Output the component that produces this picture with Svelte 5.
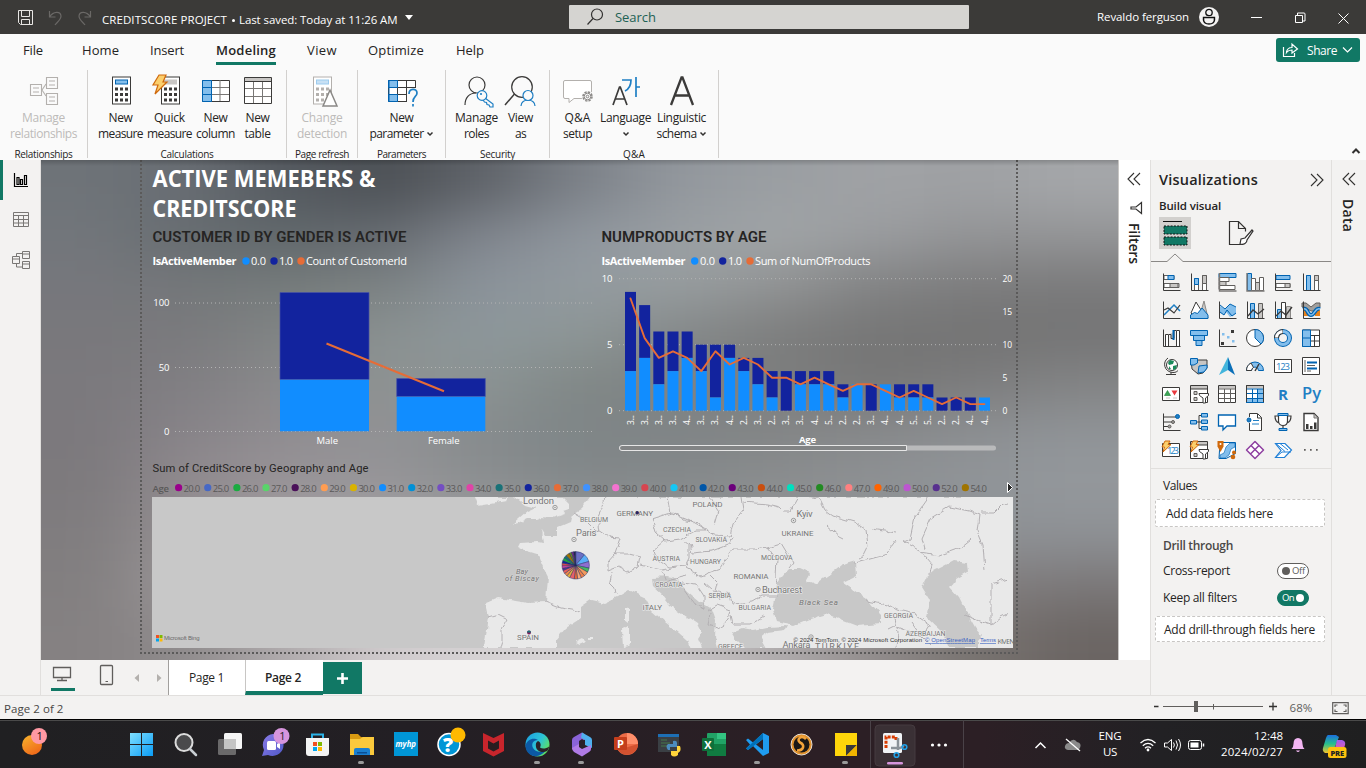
<script>
  // Sets letter-spacing so that a label takes exactly the given width.
  function fit(node, width) {
    const natural = node.getBoundingClientRect().width;
    const n = node.textContent.length;
    node.style.letterSpacing = (width - natural) / n + 'px';
  }

  const K = '#3b3a39', D = '#0063b1', B = '#83beec', G = '#c8c6c4', S = '#605e5c';
  const dots = (x, y, c) => [0, 1, 2].map((r) => [0, 1, 2].map((q) => `<rect x="${x + q * 5}" y="${y + r * 5.5}" width="3" height="3" fill="${c}"/>`).join('')).join('');
  const calc = (c, f, d) => `<rect x="7.5" y="2" width="18" height="27" fill="#fff" stroke="${c}" stroke-width="1"/><rect x="10.5" y="5" width="12" height="4" fill="${f}" stroke="${d}"/>${dots(10, 12.5, c)}`;
  const bolt = '<path d="M7 0h7l-3 7h4L3 19l3-9H1z" fill="#fbcf6d" stroke="#d0690c" stroke-width="1.2"/>';

  const rib = {
    relations: `<g fill="none" stroke="#b3b0ad" stroke-width="1.1"><path d="M2.500 9.500h11v11h-11zM18.500 2.500h11v11h-11zM18.500 18.500h11v11h-11z"/><path d="M5 13h6M5 17h6M21 6h6M21 10h6M21 22h6M21 26h6M14 15l4-6M14 15l4 6" /></g>`,
    measure: calc(K, B, D),
    quick: `<g transform="translate(3 0)">${calc(K, G, G)}</g><path d="M2 13h8v8h-8z" fill="#fafafa"/><g transform="translate(1 0)">${bolt}</g>`,
    column: `<path d="M2.500 5.500h27v21h-27z" fill="#fff" stroke="${K}"/><path d="M11 5v21M20 5v21M3 12.500h26M3 19.500h26" stroke="#797775"/><path d="M2.500 5.500h9v21h-9z" fill="${B}" stroke="${D}"/><path d="M3 12.500h8M3 19.500h8" stroke="${D}"/>`,
    table: `<path d="M2.500 2.500h27v26h-27z" fill="#fff" stroke="${K}"/><path d="M3 3h26v3.500h-26z" fill="${G}"/><path d="M2.500 6.500h27" stroke="${K}"/><path d="M11.500 7v21M20.500 7v21M3 13.500h26M3 21.500h26" stroke="#797775"/>`,
    change: `<g transform="translate(-3 0)">${calc('#b3b0ad', '#c7e0f4', '#9ccbee')}</g><path d="M14 31L21 15l7 16z" fill="#fff" stroke="#8a8886" stroke-width="1.500"/>`,
    param: `<path d="M2.500 5.500h27v21h-27z" fill="#fff" stroke="${K}"/><path d="M11.500 5v21M20.500 5v21M3 12.500h26M3 19.500h26" stroke="${K}"/><path d="M2.500 5.500h9v7h-9zM2.500 19.500h9v7h-9z" fill="${B}" stroke="${D}"/><path d="M3 5v21" stroke="${D}"/><path d="M21 13h12v19H21z" fill="#fafafa"/><path d="M23 19c0-6 8-6 8-1 0 4-4 3-4 9M27 29v2.500" fill="none" stroke="#1f7fc4" stroke-width="1.700"/>`,
    roles: `<g fill="none" stroke="${K}" stroke-width="1.200"><circle cx="14" cy="10" r="8"/><path d="M2 30c0-7 4-12 11-12"/></g><g fill="#fafafa" stroke="#1f7fc4" stroke-width="1.200"><path d="M22 23l8 6v3h-3l-1-2-2-.5-.5-2-2-.5-1.500-2"/><circle cx="19" cy="20.500" r="4.800"/></g><circle cx="18" cy="19" r="1.100" fill="#1f7fc4"/>`,
    view: `<g fill="none" stroke="${K}" stroke-width="1.200"><circle cx="17" cy="12" r="10.300"/><path d="M9.500 19L0 30" stroke-width="1.500"/></g><g fill="#fafafa" stroke="#1f7fc4" stroke-width="1.200"><path d="M16 31c0-8 14-8 14 0"/><circle cx="23" cy="20.500" r="5"/></g>`,
    qa: `<path d="M3 5.500h25q1.500 0 1.500 1.500v15q0 1.500-1.500 1.500H12l-5 4v-4H3q-1.500 0-1.500-1.500V7q0-1.500 1.500-1.500z" fill="#fff" stroke="#b3b0ad"/><circle cx="25.500" cy="21.500" r="6" fill="#fafafa"/><circle cx="25.500" cy="21.500" r="4.500" fill="none" stroke="#8a8886" stroke-width="1.600" stroke-dasharray="2.300 1.200"/><circle cx="25.500" cy="21.500" r="3.300" fill="none" stroke="#8a8886"/><circle cx="25.500" cy="21.500" r="1.300" fill="none" stroke="#8a8886"/>`,
    lang: `<path d="M2 30L8.500 12h.8L16 30M4.500 24h9" fill="none" stroke="${K}" stroke-width="1.700"/><path d="M11 5h9c0 5-2 9-6 11M25 2v20M25 12h4" fill="none" stroke="#1f7fc4" stroke-width="1.700"/>`,
    ling: `<path d="M5 30L15.500 2.500h1L27 30M9 20.500h14" fill="none" stroke="${K}" stroke-width="2.300"/>`
  };

  const groups = [
    { w: 88, label: 'Relationships', lw: 58, off: true, btns: [{ i: 'relations', w: 87, a: 'Manage', aw: 43, b: 'relationships', bw: 67 }] },
    { w: 199, label: 'Calculations', lw: 53, btns: [
      { i: 'measure', w: 50, a: 'New', aw: 24, b: 'measure', bw: 45 }, { i: 'quick', w: 48, a: 'Quick', aw: 31, b: 'measure', bw: 45, dx: -3 },
      { i: 'column', w: 44, a: 'New', aw: 24, b: 'column', bw: 39 }, { i: 'table', w: 40, a: 'New', aw: 24, b: 'table', bw: 26 }], shift: -0.5 },
    { w: 71, label: 'Page refresh', lw: 54, off: true, btns: [{ i: 'change', w: 70, a: 'Change', aw: 41, b: 'detection', bw: 50, dx: 3 }] },
    { w: 88, label: 'Parameters', lw: 49, btns: [{ i: 'param', w: 86, a: 'New', aw: 24, b: 'parameter', bw: 54, c: true }] },
    { w: 104, label: 'Security', lw: 35, btns: [{ i: 'roles', w: 54, a: 'Manage', aw: 43, b: 'roles', bw: 25, dx: 2 }, { i: 'view', w: 34, a: 'View', aw: 25, b: 'as', bw: 11, dx: 0 }], shift: -4 },
    { w: 169, label: 'Q&A', lw: 22, btns: [{ i: 'qa', w: 40, a: 'Q&A', aw: 26, b: 'setup', bw: 29 }, { i: 'lang', w: 56, a: 'Language', aw: 51, c: true, bw: 0, dx: 1 }, { i: 'ling', w: 56, a: 'Linguistic', aw: 49, b: 'schema', bw: 40, c: true }], shift: -0.5 }
  ];
  const menus = [['File', 23, 20], ['Home', 39, 37], ['Insert', 31, 34], ['Modeling', 32, 60], ['View', 31, 30], ['Optimize', 31, 56], ['Help', 32, 28]];

  const ax = `<path d="M1.500 .5v17h17" fill="none" stroke="${K}"/>`;
  const card = `<path d="M.5 2.500h17v13H.5z" fill="#fff" stroke="${K}"/>`;
  const miniBolt = '<path d="M3 0h5L6 3.500h3L1 11l1.500-5H0z" fill="#fbcf6d" stroke="#d0690c"/>';
  const viz = [
    `<path d="M2 2.500h10v4H2zM2 10.500h15v4H2z" fill="#fff" stroke="${S}"/><path d="M6 2.500h6v4H6z" fill="${B}" stroke="${D}"/><path d="M8 10.500h8v4H8z" fill="${G}" stroke="${S}"/>${ax}`,
    `<path d="M4.500 5.500h4v12h-4zM12.500 2.500h4v15h-4z" fill="#fff" stroke="${S}"/><path d="M4.500 5.500h4v6h-4z" fill="${B}" stroke="${D}"/><path d="M12.500 2.500h4v8h-4z" fill="${G}" stroke="${S}"/>${ax}`,
    `<path d="M1 .5h17v4H1z" fill="${B}" stroke="${D}"/><path d="M1 4.500h10v4H1zM1 12.500h16v4H1z" fill="#fff" stroke="${S}"/><path d="M1 8.500h7v4H1z" fill="${G}" stroke="${S}"/><path d="M1.500 0v18h17" fill="none" stroke="#797775" stroke-width="1.400"/>`,
    `<path d="M1.500 .5h4v17h-4z" fill="${B}" stroke="${D}"/><path d="M5.500 5.500h4v12h-4z" fill="#fff" stroke="${S}"/><path d="M9.500 9.500h4v8h-4z" fill="${G}" stroke="${S}"/><path d="M13.500 4.500h4v13h-4z" fill="#fff" stroke="${S}"/><path d="M1 0v18h17.500" fill="none" stroke="#797775" stroke-width="1.400"/>`,
    `<path d="M2 2.500h14v4H2z" fill="${B}" stroke="${D}"/><path d="M2 10.500h14v4H2z" fill="#fff" stroke="${S}"/><path d="M11 10.500h5v4h-5z" fill="${G}" stroke="${S}"/>${ax}`,
    `<path d="M4.500 2.500h4v15h-4zM12.500 2.500h4v15h-4z" fill="#fff" stroke="${S}"/><path d="M4.500 2.500h4v15h-4z" fill="${B}" stroke="${D}"/><path d="M12.500 2.500h4v5h-4z" fill="${G}" stroke="${S}"/>${ax}`,
    `<path d="M2 14L12 4l6 6" fill="none" stroke="#1f7fc4" stroke-width="1.500"/><path d="M2 9l4-2 6 5 6-8" fill="none" stroke="${K}" stroke-width="1.200"/>${ax}`,
    `<path d="M9 17L14 0l4 17z" fill="${G}" stroke="#8a8886"/><path d="M1 12L6 1l5 8-5 8z" fill="#fff" stroke="${K}"/><path d="M.5 17.500V14l4-2.500 3 1L12 7l6 7v3.500z" fill="${B}" stroke="${D}"/>`,
    `<path d="M2 5l5 3 5-5 6 3v7l-6 3-4-5-2 3-4-2z" fill="${B}"/><path d="M2 4l5 4 5-5 6 3M2 11l4 3 3-5 5 6 4-3" fill="none" stroke="${D}"/>${ax}`,
    `<path d="M4.500 2.500h4v15h-4z" fill="${B}" stroke="${D}"/><path d="M12.500 2.500h4v15h-4z" fill="${G}" stroke="${S}"/><path d="M2 15l5-6 5 4 6-5" fill="none" stroke="${K}" stroke-width="1.300"/>${ax}`,
    `<path d="M3.500 8.500h4v9h-4z" fill="${B}" stroke="${D}"/><path d="M7.500 1.500h4v16h-4z" fill="#fff" stroke="${K}"/><path d="M12.500 5.500h4v12h-4z" fill="${G}" stroke="#8a8886"/><path d="M2 15l5-5 5 4 6-8" fill="none" stroke="${K}" stroke-width="1.300"/>${ax}`,
    `<path d="M1 9h5v6H1zM13 9h5v6h-5z" fill="#e8811a"/><path d="M0 2h4l5 4 5-4h4v4l-5 4h-4L2 6H0z" fill="#a19f9d" stroke="#605e5c"/><path d="M1 8c5-2 4 6 8 6s4-8 9-6" fill="none" stroke="${D}" stroke-width="4"/><path d="M1 8c5-2 4 6 8 6s4-8 9-6" fill="none" stroke="${B}" stroke-width="1.500"/>${ax}`,
    `<path d="M3.500 5.500h3v12h-3zM14.500 1.500h3v16h-3z" fill="#fff" stroke="${K}"/><path d="M7 5.500h2v4h3V1.500h2" fill="${G}" stroke="${K}"/><path d="M11.500 1v10" stroke="${D}" stroke-width="2"/>${ax}`,
    `<path d="M.5 1.500h17v5H.5zM3.500 6.500h11v5h-11zM6 11.500h6v5H6z" fill="${B}" stroke="${D}"/>`,
    `${ax}<path d="M13 1h3v3h-3zM3 13h3v3H3z" fill="${K}"/><path d="M4 4h2.500v2.500H4zM9 7h2.500v2.500H9zM14 11h2.500v2.500H14z" fill="${B}"/>`,
    `<circle cx="9" cy="9" r="8.500" fill="#fff" stroke="${K}"/><path d="M9 .5V9l6 6A8.500 8.500 0 009 .5z" fill="${B}" stroke="${D}"/>`,
    `<circle cx="9" cy="9" r="6.500" fill="none" stroke="${D}" stroke-width="5"/><circle cx="9" cy="9" r="6.500" fill="none" stroke="${B}" stroke-width="3"/><path d="M2.500 9A6.500 6.500 0 019 2.500" fill="none" stroke="${K}" stroke-width="5"/><path d="M2.500 8.500A6.500 6.500 0 018.500 2.500" fill="none" stroke="#fff" stroke-width="3"/>`,
    `<path d="M.5 1h17v16.500H.5z" fill="#fff" stroke="${K}"/><path d="M.5 1h8v16.500h-8z" fill="${B}" stroke="${D}"/><path d="M9 6.500h8.500M12.500 6.500v11M9 12h8" stroke="${K}" fill="none"/><path d="M.5 9h8" stroke="${D}"/>`,
    `<circle cx="10" cy="8" r="5.500" fill="#fff" stroke="${K}"/><path d="M8 3l4 1-1 3-4 1-1-2zM11 9l4-1-1 4-3 1zM7 9l2 3h-2z" fill="#1a8a5a"/><path d="M6 1C0 5 2 15 11 15.500c3 0 4-1 5-2M9 15v2.500M4 17.500h10" fill="none" stroke="${K}"/>`,
    `<path d="M1 2h4l3 1h9v8l-4 5-5 1-6-5z" fill="${G}" stroke="${K}"/><path d="M.5 1.500h7V6L4 8H.5zM9 9l8-1v3l-3 4-6 1z" fill="${B}" stroke="${D}"/>`,
    `<path d="M10 0L1 18l9-5z" fill="#43b5dc"/><path d="M10 0l7 18-7-5z" fill="#0a6fb8"/>`,
    `<path d="M.5 13.500a8.500 8.500 0 0117 0h-5a3.500 3.500 0 00-7 0z" fill="${B}" stroke="${D}"/><path d="M.5 13.500A8.500 8.500 0 015 6l2.500 4.500a3.500 3.500 0 00-2 3z" fill="#fff" stroke="${K}"/><path d="M9 14l4-7" stroke="${K}" stroke-width="1.500"/>`,
    `${card}<text x="2" y="12.500" font-size="9.500" font-family="Open Sans,sans-serif" fill="#1f7fc4" textLength="14">123</text>`,
    `<path d="M.5 .5h17v17H.5z" fill="#fff" stroke="${K}"/><path d="M3 3v12M5 8.500h8M5 14h4" stroke="${S}"/><path d="M5 5.500h10M5 11.500h10" stroke="${D}" stroke-width="2"/>`,
    `${card}<path d="M2.500 10.500l3-5 3 5z" fill="#3aa655" stroke="#197a33" stroke-width=".6"/><path d="M9.500 5.500h6l-3 5z" fill="#e8383d"/><path d="M4 13h4M11 13h4" stroke="${G}"/>`,
    `<path d="M.5 .5h17v17H.5z" fill="#fff" stroke="${K}"/><path d="M1 1h16v3H1z" fill="${G}"/><path d="M.5 4h17" stroke="${K}"/><path d="M4 6.500h3v3H4zM4 12.500h3v3H4z" fill="${G}" stroke="${S}"/><path d="M9 8.500h9.500v2L15.500 13v5h-2.500v-5L9.500 10.500z" fill="#fff" stroke="${K}"/>`,
    `<path d="M.5 .5h17v17H.5z" fill="#fff" stroke="${K}"/><path d="M1 1h16v2.500H1z" fill="${G}"/><path d="M.5 4h17M6.500 4v14M12.500 4v14M1 8.500h16M1 13.500h16" stroke="${S}" fill="none"/>`,
    `<path d="M.5 .5h17v17H.5z" fill="#fff" stroke="${K}"/><path d="M1 1h16v2.500H1z" fill="${G}"/><path d="M12 4h5.500v13.500H.5v-4H12z" fill="${B}"/><path d="M.5 4h17M6.500 4v14M11.500 4v14M1 8.500h16M1 13.500h16" stroke="${D}" fill="none"/><path d="M.5 18V.5h17V18" fill="none" stroke="${K}"/><path d="M0 17.500h18" fill="none" stroke="${D}"/>`,
    `<text x="4" y="15" font-size="15" font-weight="700" font-family="Open Sans,sans-serif" fill="#1f7fc4" textLength="10" lengthAdjust="spacingAndGlyphs">R</text>`,
    `<text x="0" y="14" font-size="16" font-weight="600" font-family="Open Sans,sans-serif" fill="#1f7fc4" textLength="19" lengthAdjust="spacingAndGlyphs">Py</text>`,
    `${ax}<path d="M2 4h12M2 9h8M2 13.500h4" stroke="${K}"/><circle cx="15.500" cy="3.500" r="2" fill="#1f7fc4" stroke="${D}"/><circle cx="11" cy="9" r="1.500" fill="#a19f9d" stroke="${S}"/><circle cx="7.500" cy="13.500" r="1.500" fill="#a19f9d" stroke="${S}"/>`,
    `<path d="M6 9h6M9 9V2.500h3M9 9v6.500h3" fill="none" stroke="${K}"/><path d="M.5 7.500h6v3.500h-6zM11.500 .5h6V4h-6zM11.500 7h6v3.500h-6zM11.500 13.500h6V17h-6z" fill="${B}" stroke="${D}"/>`,
    `<path d="M.5 2h17v11H9l-4 4v-4H.5z" fill="#fff" stroke="${D}" stroke-width="1.300"/>`,
    `<path d="M3.500 4V.5h8l4 4v13h-12V10" fill="#fff" stroke="${K}"/><path d="M11.500 1v4h4" fill="none" stroke="${K}"/><circle cx="3" cy="7" r="2" fill="#1f7fc4" stroke="${D}"/><path d="M7 7.500h6M6 11h7" stroke="#1f7fc4"/>`,
    `<path d="M4.500 1h9v7c0 6-9 6-9 0zM4 3H1c0 4 1 6 4 7M14 3h3c0 4-1 6-4 7M9 13v3" fill="#fff" stroke="${K}" stroke-width="1.200"/><path d="M4 .5h10v2H4zM5 15.500h8v2H5z" fill="${B}" stroke="${D}"/>`,
    `<path d="M2 .5h10l4 4v13H2z" fill="#fff" stroke="${K}" stroke-width="1.400"/><path d="M12 1v4h4" fill="${G}" stroke="#797775"/><path d="M4 11h2.500v5H4zM8 13h2.500v3H8zM12 9.500h2.500V16H12z" fill="${K}"/>`,
    `${card}<text x="5" y="13" font-size="9.500" font-family="Open Sans,sans-serif" fill="#1f7fc4" textLength="12">123</text>${miniBolt}`,
    `<path d="M.5 .5h17v17H.5z" fill="#fff" stroke="${K}"/><path d="M1 1h16v3H1z" fill="${G}"/><path d="M.5 4h17" stroke="${K}"/><path d="M4 12.500h3v3H4z" fill="${G}" stroke="${S}"/><path d="M9 8.500h9.500v2L15.500 13v5h-2.500v-5L9.500 10.500z" fill="#fff" stroke="${K}"/>${miniBolt}`,
    `<path d="M2 1.500h15.500v11L8 17.500H1z" fill="#fff" stroke="${D}"/><path d="M17 2v4l-4 2-2 6-4 3H2v-3l4-2 2-6 4-4z" fill="${B}" stroke="${D}" stroke-width=".6"/><path d="M-.5 0h6v5.500L2.500 11-.5 5.500z" fill="#d0690c"/><circle cx="2.500" cy="3" r="1" fill="#fff"/><circle cx="16" cy="11.500" r="2" fill="#d0690c"/><circle cx="15" cy="16" r="2.300" fill="#d0690c"/>`,
    `<path d="M9 .5L17.500 9 9 17.500 .5 9zM5 4.500l8.500 8.500M13 4.500L4.500 13" fill="#fff" stroke="#8e3fa0" stroke-width="1.500" stroke-linejoin="round"/>`,
    `<path d="M1.500 2.500H11l6.500 6.500-7 7.500H1.500L7 9.500z" fill="#fff" stroke="#1f7fd6" stroke-width="1.200"/><path d="M2 2.500l9 8M6 2.500l8 6.500M2 16l6-5h9" fill="none" stroke="#1f7fd6"/>`,
    `<path d="M2 8h1.700v1.700H2zM8 8h1.700v1.700H8zM14 8h1.700v1.700H14z" fill="${S}"/>`
  ];

  // Report background: a coarse colour mesh, blurred.
  const mesh = [
    ['6e7378', '686d73', '54595f', '4c5055', '5e6268', '7b8087', '92979d', '9a9ea2', 'a0a2a5', '9fa1a4', 'a5a7aa'],
    ['72767b', '666c70', '60676b', '656a70', '80858d', '8f969e', '9a9fa3', 'a1a5a7', '9b9da0', '939496', '949597'],
    ['76777c', '74777a', '757b7b', '7c8283', '8b939b', '929a9f', '979d9f', '929495', '828384', '7c7c7d', '7a7a7b'],
    ['79787c', '7a7a7d', '818585', '8a9191', '8d979b', '8d9696', '848889', '7c7d7d', '757575', '737373', '747475'],
    ['7b797d', '817f83', '8a8a8c', '8e9292', '8b9393', '808786', '7e8282', '7d7e7e', '777777', '7c7c7d', '838485'],
    ['7c797d', '888489', '908d91', '929295', '868b8d', '7e8587', '808587', '848687', '888a8c', '8d9093', '909498'],
    ['7d7a7d', '918b8f', '999498', '969598', '8b8e90', '83888a', '85898b', '8a8d8f', '8e9194', '909498', '94989c'],
    ['807d7f', '969193', 'a5a0a3', 'aba7aa', 'a7a5a7', '9e9fa0', '9a9c9d', '969798', '909294', '8f9295', '8e9195'],
    ['827f80', '9c9799', 'b1acae', 'c3bfc1', 'c9c6c7', 'c5c3c4', 'bbb8b9', 'a8a5a6', '918e8f', '837f80', '7b7879'],
    ['858182', '8f8b8c', 'b0abad', 'd0cbcd', 'd6d2d4', 'd5d2d3', 'c8c4c6', 'b1adae', '918c8c', '787370', '6b6563']
  ];

  const bars = [[3, 9], [4, 8], [2, 6], [3, 6], [4, 6], [3, 5], [1, 5], [4, 5], [3, 4], [2, 4], [1, 3], [0, 3], [2, 3], [2, 3], [2, 3], [1, 2], [2, 2], [0, 2], [2, 2], [1, 2], [1, 2], [1, 2], [0, 1], [0, 1], [0, 1], [1, 1]];
  const sums = [17, 11, 8, 9, 8, 6, 9, 7, 8, 7, 5, 5, 4, 5, 4, 3, 4, 4, 3, 2, 3, 2, 1, 2, 1, 1];
  const ages = '33334334232334522344552244'.split('');
  const bx = (i) => 625 + i * 14.16;
  const by = (v) => 410.7 - v * 13.2;
  const line = sums.map((v, i) => `${bx(i) + 5.5},${by(v / 2)}`).join(' ');

  const legend = [['20.0', '#99008b'], ['25.0', '#4668c5'], ['26.0', '#1aab40'], ['27.0', '#59d46a'], ['28.0', '#4a1059'], ['29.0', '#ff9d52'], ['30.0', '#d9b300'], ['31.0', '#118dff'], ['32.0', '#0190d6'], ['33.0', '#744ec2'], ['34.0', '#e044a7'], ['35.0', '#197278'], ['36.0', '#12239e'], ['37.0', '#e66c37'], ['38.0', '#4092ff'], ['39.0', '#f472d0'], ['40.0', '#d64550'], ['41.0', '#15c6f4'], ['42.0', '#0056a8'], ['43.0', '#6b007b'], ['44.0', '#c94f0f'], ['45.0', '#00e0bf'], ['46.0', '#228b22'], ['47.0', '#ff8080'], ['49.0', '#ff6300'], ['50.0', '#bd56d0'], ['52.0', '#58308f'], ['54.0', '#a07400']];

  const slices = [['#6b70c4', 40], ['#5aaef8', 34], ['#8d6fd0', 28], ['#48b860', 18], ['#f29a5c', 20], ['#ec8048', 16], ['#f6a878', 16], ['#e66c37', 14], ['#e4606a', 20], ['#e8b23c', 14], ['#f08a4a', 14], ['#e86060', 14], ['#58308f', 10], ['#e044a7', 10], ['#d64550', 12], ['#12239e', 10], ['#1aab40', 14], ['#197278', 12], ['#a07400', 16], ['#6b8e23', 10], ['#7b2a86', 9], ['#22224e', 9]];
  let acc = 0;
  const pie = slices.map(([c, a]) => {
    const r = (t) => [575.7 + 13.7 * Math.sin((t * Math.PI) / 180), 565.3 - 13.7 * Math.cos((t * Math.PI) / 180)];
    const [x1, y1] = r(acc);
    acc += a;
    const [x2, y2] = r(acc);
    return { c, d: `M575.7 565.3L${x1} ${y1}A13.7 13.7 0 0 1 ${x2} ${y2}z` };
  });

  const land = [
    'M475 497h33l-2 3-16 3-12 2z',
    'M515 497l10 8 11 3-9 4-14 12 6-1 8-4 9 0 5-2 12 1 12-4-2-3 6-2 1-5-7-7z',
    'M590 497l-8 11-9 6 -2 8-14 6 0 7-12 0-3-5 2 13-7-1-17 1-2 4 10 5 10 3 4 10 6 12-2 25-18 1-30-5-12 5 3 14-5 31h72v-8l10-12 15-10v-11l10-7 13 3 13-6 12-7 15 7 7 13 14 12 14 11 9 8 6 14h330V497z'
  ];
  const seas = [
    'M652 577l1 10 9 8 8 10 13 9 15 10 4 8-4 6 4 10h16l-3-11 1-17-4-11-13-8-12-10-9-10-5-4 -6-1z',
    'M778 583l-2 13-3 14 4 12 16 4 17-7 17-5 14 6 16 6 23-2 0-10-13-15-24-16 14-7-1-15-14 4-10 8-5 4-3 2-8 6-10-4 4-7-11-5-10 0-7 8z',
    'M927 577l-5 10 8 13-3 17 16 15 7 16h28l0-8 4-5-7-8-8-14-8-16-9-10 6-8 12-7-1-9-14-2-11 6-8 4z',
    'M732 632l10-4 12 2 14-3 18-1-2 4-16 2-8 5 6 11h-21l-8-8z'
  ];
  const isles = ['M625 609l4-2 0 15-4-3z', 'M622 629l8-3 0 20-7 2z', 'M575 642l8-4 3 3-7 3z', 'M588 637h4v2h-4z'];
  const borders = [
    'M573 513l12 7 9 9 6 2 0 0-2-14 5-11 2-9', 'M598 530l10 7 12 1-5 15 1 2', 'M608 563l8-9 12 0 12 3-2 10-10 5-10-5-10 4z', 'M611 572l-2 10 6 6 1 6',
    'M668 497l3 16-19 6 4 14 9 8 15-2 15-8 9 0-5-8-13-2-14-8', 'M671 513l17 7 16 9 10 6 16 1 3-12 10-14-2-13', 'M743 502l24 2 12 3 4 4 7 0 9-16 20 3 6 12 8 6 21 6 12 8 2 15-6 12-4 2',
    'M665 541l-12 10 2 6 14 10 16-2 4-8 0-12-6-5', 'M690 545l2 8 20-2 18-7 3-8', 'M733 549l-13 20-20 7-14-8 3-9', 'M733 549l22 0 12-2 10 12-1 18 2 6', 'M767 547l14-4 12 20-4 5', 'M704 583l9 8 17 3 2 10 20-2 10-6 16 0', 'M682 583l14 2 8 12 0 12-10-6-10-14', 'M707 611l10-6 14 5-4 12-9 6-10-3 2-12', 'M731 615l2 9 17 0 14-8', 'M640 565l12 3 10 2 14-3', 'M662 572l4 10 12-4 8-2', 'M708 573l10 10-2 8 4 8',
    'M545 602l15 6 12 2 8 2', 'M488 617l10-3 10 5-6 10 0 12-2 7', 'M866 600l22 4 10 6 16 4 16 11-4 6-16 1-16-6-6 3', 'M895 618l3 14-2 16M911 622l10 14 10 10',
    'M929 497l-14 20-5 22-6 3 18 10 10 12-2 10', 'M925 550l-3-12 9-20 18-11 20 4 10 4-2 16 6 14 2 26', 'M921 552l18 3 22-8 10-8', 'M981 512l14 0 8-8 10-2', 'M1013 578l-22 6v40M965 615l14 6 12 4 10-8 12-6', 'M826 525l14 12 4 2M855 563l30-8 10-14M872 529l24 4', 'M710 497l8 14-4 14'
  ];
  const places = [
    ['London', 523, 503.5, 31, 9.5], ['Paris', 576, 536, 20.5, 9.5], ['GERMANY', 616.5, 516, 36.5, 8], ['POLAND', 692.5, 506.5, 30, 8], ['BELGIUM', 580, 521.5, 28, 7], ['CZECHIA', 663, 532, 28, 7],
    ['SLOVAKIA', 695.5, 541.5, 31.5, 7], ['Kyiv', 796.5, 516.5, 16, 9.5], ['UKRAINE', 781.5, 535.5, 32, 8], ['AUSTRIA', 652.5, 560.5, 27.5, 7], ['HUNGARY', 690, 563.5, 31, 7], ['MOLDOVA', 761, 559.5, 31.5, 7],
    ['ROMANIA', 733.5, 579, 35, 8], ['CROATIA', 655, 586.5, 27.5, 7], ['Bucharest', 762, 592.5, 40, 9.5], ['SERBIA', 708.5, 597.5, 22.5, 7], ['BULGARIA', 738.5, 609.5, 32.5, 7], ['ITALY', 642.5, 610, 19.5, 8],
    ['GEORGIA', 884, 618, 29, 7], ['AZERBAIJAN', 905.5, 635.5, 40, 7], ['GREECE', 718, 649, 25, 7], ['Ankara', 782.5, 648, 28, 9.5], ['TÜRKIYE', 815, 649.5, 44, 9], ['SPAIN', 517, 640, 22, 8], ['KMEN', 997.5, 643.5, 17, 7.5]
  ];

  const tasks = [
    `<path d="M1 1h11v11H1zM13 1h11v11H13zM1 13h11v11H1zM13 13h11v11H13z" fill="url(#win)"/>`,
    `<circle cx="11" cy="10.500" r="8.500" fill="#4a4a4c" stroke="#dcdcdc" stroke-width="2"/><path d="M17 17l6 6" stroke="#c9ced3" stroke-width="2.500" stroke-linecap="round"/>`,
    `<rect x="7" y="1" width="18" height="16" rx="1.500" fill="#f5f5f5"/><rect x="1" y="7" width="18" height="16" rx="1.500" fill="#777" fill-opacity=".85"/><path d="M7 7h12v10H7z" fill="#c4c4c4"/>`,
    `<path d="M12 2a11 11 0 11-5 21l-6 1 2-6A11 11 0 0112 2z" fill="url(#chat)"/><rect x="6" y="9" width="9" height="9" rx="1.500" fill="#fff"/><path d="M16 12l3-2v7l-3-2z" fill="#fff"/><circle cx="20.500" cy="4" r="8" fill="#d695dd"/><text x="18.200" y="8" font-size="11" font-family="Open Sans,sans-serif" fill="#222">1</text>`,
    `<path d="M7 6V2.500h11V6" fill="none" stroke="#2bb3e8" stroke-width="2"/><path d="M1 6h23v15q0 3-3 3H4q-3 0-3-3z" fill="#f4f4f4"/><path d="M8 10h4v4H8z" fill="#f25022"/><path d="M13 10h4v4h-4z" fill="#7fba00"/><path d="M8 15h4v4H8z" fill="#00a4ef"/><path d="M13 15h4v4h-4z" fill="#ffb900"/>`,
    `<path d="M1 2h8l3 3h13v6H1z" fill="#d99a12"/><path d="M1 7h10l3-2h11v18H1z" fill="#fbc93c"/><path d="M5 23v-5q0-2 2-2h12q2 0 2 2v5z" fill="#1a7fd0"/><path d="M8 20h10v1.500H8z" fill="#0a4f96"/>`,
    `<rect x="1" y="0" width="24" height="24" fill="#0096d6"/><text x="2.500" y="15" font-size="9" font-style="italic" font-weight="700" font-family="Open Sans,sans-serif" fill="#fff" textLength="20.500" lengthAdjust="spacingAndGlyphs">myhp</text>`,
    `<circle cx="12" cy="12.500" r="11" fill="#0096d6" stroke="#fff" stroke-width="1.500"/><text x="6" y="20" font-size="20" font-weight="800" font-family="Open Sans,sans-serif" fill="#fff">?</text><circle cx="21" cy="3" r="7.500" fill="#ffb900"/>`,
    `<path d="M2 1l10.500 5L23 1v18l-10.500 5.500L2 19z" fill="#c8252c"/><path d="M7 8.500l5.500 3 5.500-3v8l-5.500 3L7 16.500z" fill="#2a1d20"/>`,
    `<circle cx="12.500" cy="12.500" r="12" fill="url(#edge)"/><path d="M.5 13.500C2 7 9 5 13 8c-5 0-7 4-5 8s8 5 13 2c-4 6-11 8-16 4.500-3-2-4.500-5-4.500-9z" fill="#0c59a4"/><path d="M13 9c2.500 1 3.500 4 2 6.500 2 1.500 6 1.500 9-1 0 2-1 3.500-2 4.500-4 2-10 1-11-4-.5-3 0-5 2-6z" fill="#2a2329"/>`,
    `<path d="M13 .5l3 2v5l-6 4v8L3 17V8q0-2 2-3z" fill="#8a63d8"/><path d="M13 .5l8 4.500q2 1 2 3v8l-7-3V8l-4-2.500z" fill="#4fb0ee"/><path d="M3 16l7-4 0 3 3 2 9-4v4q0 2-2 3l-7 4.500L5 20q-2-1.500-2-4z" fill="#b07be6"/><path d="M10 9l3-2 3 2v5l-3 2-3-2z" fill="#2a2029"/>`,
    `<circle cx="14" cy="12" r="11" fill="#ed6c47"/><path d="M14 1a11 11 0 0111 11H14z" fill="#ff8f6b"/><path d="M25 12a11 11 0 01-20 6z" fill="#d35230"/><rect x="1" y="5" width="13" height="13" rx="1" fill="#c43e1c"/><text x="4" y="15.500" font-size="11" font-weight="700" font-family="Open Sans,sans-serif" fill="#fff">P</text>`,
    `<rect x="1" y="2" width="21" height="18" fill="#3a3f44"/><path d="M1 2h21v3H1z" fill="#1d6fb5"/><path d="M4 8h6M4 11h9M4 14h6" stroke="#44784a"/><path d="M16 9q4-1 4 2v4h-7v3h-2q-3-4 0-6h5z" fill="#4b8bbe"/><path d="M20 14h3q2 5-2 7v2q-4 3-7 0v-4h6z" fill="#ffd43b"/>`,
    `<rect x="6" y="1" width="19" height="23" rx="1" fill="#21a366"/><path d="M6 12h19v12H6z" fill="#107c41"/><path d="M16 1h9v6h-9z" fill="#33c481"/><rect x="1" y="6" width="12" height="13" rx="1" fill="#0f703b"/><text x="3.300" y="16.500" font-size="11" font-weight="700" font-family="Open Sans,sans-serif" fill="#fff">X</text>`,
    `<path d="M18 1l6 3v17l-6 3L8 14l-5 4-2-1.500L5 12.500 1 8l2-1.500 5 4z" fill="#1f9cf0"/><path d="M18 7v11l-7-5.500z" fill="#2a2028"/><path d="M1 16.500l2 1.500L18 7V1L1 16.500z" fill="#0070b8"/>`,
    `<circle cx="12.500" cy="12.500" r="10.500" fill="#e0912c" stroke="#e8e0d8"/><circle cx="12.500" cy="12.500" r="8" fill="#1b1816"/><path d="M17 7q-3-3-6-1.500-3 2.500 0 5 4 2 3 5t-6 3" fill="none" stroke="#f2a33a" stroke-width="2.600"/>`,
    `<path d="M2 1h22v23H2z" fill="#ffd60a"/><path d="M13 24V13h11z" fill="#3a3a3a"/><path d="M13 24l11-11v11z" fill="#f0b400"/>`
  ];
  const running = [5, 9, 10, 14, 16];
</script>

{#snippet chev(c)}
  <svg width="8" height="6" viewBox="0 0 8 6"><path d="M1.500 1.500L4 4l2.500-2.500" fill="none" stroke={c} stroke-width="1.500" /></svg>
{/snippet}

<div class="app">
  <header class="title">
    <svg width="100" height="34" viewBox="0 0 100 34" fill="none">
      <path d="M18.500 10.500h14v14H20.500l-2-2zM21.500 11v5.500h8V11M21.500 24v-4.500h8V24" stroke="#e8e6e4" />
      <path d="M49.500 11v6h6M49.500 17c4-6 11-6 11.500-1 0 4-4 6-6 9M90.500 11v6h-6M90.500 17c-4-6-11-6-11.500-1 0 4 4 6 6 9" stroke="#6a6866" stroke-width="1.200" />
    </svg>
    <div class="doc"><span use:fit={125}>CREDITSCORE PROJECT</span><i class="bullet"></i><span use:fit={158.5}>Last saved: Today at 11:26 AM</span><b class="tri"></b></div>
    <div class="search">
      <svg width="18" height="18" viewBox="0 0 18 18"><circle cx="11" cy="6.500" r="5.500" fill="none" stroke="#323130" stroke-width="1.200" /><path d="M7 10.500L1.500 16.500" stroke="#323130" stroke-width="1.200" /></svg>
      <span use:fit={41}>Search</span>
    </div>
    <div class="user"><span use:fit={92}>Revaldo ferguson</span>
      <svg width="20" height="20" viewBox="0 0 20 20"><circle cx="10" cy="10" r="10" fill="#f3f2f1" /><circle cx="10" cy="5.500" r="3.200" fill="none" stroke="#111" stroke-width="1.300" /><path d="M4.500 10.500h11c.5 6-3 6.500-5.500 6.500s-6-.5-5.500-6.500z" fill="none" stroke="#111" stroke-width="1.400" /></svg>
    </div>
    <svg class="wins" width="120" height="34" viewBox="0 0 120 34" fill="none" stroke="#fff"><path d="M5 17.500h11M49.500 15.500h7v7h-7zM51.500 15v-2h6.500q1 0 1 1v7h-2M92.500 13.500l10 10M102.500 13.500l-10 10" /></svg>
  </header>

  <section class="ribbon">
    <nav class="menu">
      {#each menus as [m, gap, w]}<span class="m" class:on={m === 'Modeling'} style:margin-left="{gap}px" style:width="{w}px"><span use:fit={w}>{m}</span></span>{/each}
      <div class="share">
        <svg width="17" height="16" viewBox="0 0 17 16" fill="none" stroke="#fff" stroke-width="1.200"><path d="M1.500 5v9.500h11V11" /><path d="M4.500 10.500c.5-4 3-5 5.500-5V2l5.500 5L10 11V8c-2 0-4 .5-5.500 2.500z" /></svg>
        <span use:fit={30}>Share</span>
        <svg width="11" height="8" viewBox="0 0 11 8"><path d="M1 1.500l4.500 4.500L10 1.500" fill="none" stroke="#fff" stroke-width="1.200" /></svg>
      </div>
    </nav>
    <div class="groups">
      {#each groups as g}
        <div class="group" class:off={g.off} style:width="{g.w}px">
          <div class="btns" style:margin-left="{(g.shift || 0) * 2}px">
            {#each g.btns as b}
              <div class="btn" style:width="{b.w}px">
                <svg width="32" height="32" viewBox="0 0 32 32" overflow="visible" style:margin-left="{(b.dx || 0) * 2}px">{@html rib[b.i]}</svg>
                <div class="l"><span use:fit={b.aw}>{b.a}</span></div>
                <div class="l">{#if b.b}<span use:fit={b.bw}>{b.b}</span>{/if}{#if b.c}{@render chev('#323130')}{/if}</div>
              </div>
            {/each}
          </div>
          <div class="gl"><span use:fit={g.lw}>{g.label}</span></div>
        </div>
      {/each}
      <svg class="fold" width="10" height="8" viewBox="0 0 10 8"><path d="M1.500 6L5 2.500 8.500 6" fill="none" stroke="#323130" stroke-width="2" /></svg>
    </div>
  </section>

  <main class="work">
    <aside class="rail">
      <svg width="40" height="120" viewBox="0 0 40 120" fill="none">
        <path d="M0 0h3v40H0z" fill="#117865" />
        <path d="M14.500 13v13.500H28M17 17.500h2v7h-2zM20.500 19.500h2v5h-2zM24.500 15.500h2v9h-2z" stroke="#000" stroke-width="1.200" />
        <path d="M13.500 52.500h15v14h-15zM13.500 55.500h15M13.500 59.500h15M13.500 63h15M18.500 55v11M23.500 55v11" stroke="#797775" />
        <path d="M12.500 96.500h7v7h-7zM22.500 91.500h7v7h-7zM22.500 101.500h7v7h-7zM12.500 99h7M22.500 94h7M22.500 104h7M16.500 96v-2.500h6M16.500 104v3h6" stroke="#797775" />
      </svg>
    </aside>

    <div class="center">
      <div class="top">
        <div class="canvas">
          <svg class="photo" viewBox="0 0 1077 500" width="1077" height="500" preserveAspectRatio="none">
            <filter id="soft" x="-10%" y="-10%" width="120%" height="120%" color-interpolation-filters="sRGB"><feGaussianBlur stdDeviation="40 24" /></filter>
            <g filter="url(#soft)">
              {#each mesh as row, r}{#each row as c, q}
                <rect x={q === 0 ? -102 : q * 98} y={r === 0 ? -60 : r * 50} width={q === 0 || q === 10 ? 201 : 99} height={r === 0 || r === 9 ? 111 : 51} fill="#{c}" />
              {/each}{/each}
            </g>
          </svg>
          <div class="sheet">
            <div class="pair">
              <svg width="449" height="302" viewBox="152 160 449 302" class="chart">
                <g class="h1"><text x="152.500" y="187" textLength="223" lengthAdjust="spacingAndGlyphs">ACTIVE MEMEBERS &amp;</text><text x="152.500" y="217" textLength="144" lengthAdjust="spacingAndGlyphs">CREDITSCORE</text></g>
                <text class="din" x="152.500" y="242" textLength="254">CUSTOMER ID BY GENDER IS ACTIVE</text>
                <g class="lg">
                  <text class="b" x="152.500" y="264.500" textLength="84">IsActiveMember</text>
                  <circle cx="246" cy="261" r="3.700" fill="#118dff" /><text x="251" y="264.500" textLength="15">0.0</text>
                  <circle cx="274" cy="261" r="3.700" fill="#12239e" /><text x="279" y="264.500" textLength="14">1.0</text>
                  <circle cx="301" cy="261" r="3.700" fill="#e66c37" /><text x="306" y="264.500" textLength="101">Count of CustomerId</text>
                </g>
                {#each [[100, 303], [50, 367.5], [0, 431.5]] as [v, y]}
                  <path d="M175 {y}H594" class="grid" /><text class="ax" x="169.500" y={y + 3} text-anchor="end">{v}</text>
                {/each}
                <path d="M280 292.500h89v87h-89zM396.700 378.500h88.600v18h-88.600z" fill="#12239e" stroke="#4652a8" stroke-width=".7" />
                <path d="M280 379.700h89v51.500h-89zM396.700 396.700h88.600v34.500h-88.600z" fill="#118dff" />
                <path d="M326.500 343.500L444 391.300" stroke="#e66c37" stroke-width="2" />
                <text class="ax" x="316.500" y="444" textLength="21.500">Male</text><text class="ax" x="428" y="444" textLength="31.500">Female</text>
              </svg>
              <svg width="412" height="302" viewBox="601 160 412 302" class="chart">
                <text class="din" x="601.500" y="242" textLength="165">NUMPRODUCTS BY AGE</text>
                <g class="lg">
                  <text class="b" x="601.500" y="264.500" textLength="84">IsActiveMember</text>
                  <circle cx="694.700" cy="261" r="3.700" fill="#118dff" /><text x="700" y="264.500" textLength="15">0.0</text>
                  <circle cx="722.700" cy="261" r="3.700" fill="#12239e" /><text x="728" y="264.500" textLength="14">1.0</text>
                  <circle cx="750" cy="261" r="3.700" fill="#e66c37" /><text x="755" y="264.500" textLength="115.500">Sum of NumOfProducts</text>
                </g>
                {#each [[10, 278.7], [5, 344.7], [0, 410.7]] as [v, y]}
                  <path d="M619 {y}H996" class="grid" /><text class="ax" x="612.500" y={y + 3} text-anchor="end">{v}</text>
                {/each}
                {#each [20, 15, 10, 5, 0] as v, i}<text class="ax sm" x="1002.500" y={282 + i * 33}>{v}</text>{/each}
                {#each bars as [lo, all], i}
                  <rect x={bx(i)} y={by(all)} width="11" height={(all - lo) * 13.2} fill="#12239e" />
                  <rect x={bx(i)} y={by(lo)} width="11" height={lo * 13.2} fill="#118dff" />
                  <text class="tick" transform="translate({bx(i) + 8.5} 425) rotate(-90)" textLength="10">{ages[i]}...</text>
                {/each}
                <polyline points={line} fill="none" stroke="#e66c37" stroke-width="1.900" stroke-linejoin="round" stroke-linecap="round" />
                <text class="ax b" x="799" y="443" textLength="17">Age</text>
                <rect x="619" y="445.500" width="377" height="5" rx="2.500" fill="#b9babb" />
                <path d="M622 445.500h284.500v5H622q-2.500 0-2.500-2.500t2.500-2.500z" fill="#828485" stroke="#e6e6e6" />
              </svg>
            </div>
            <svg width="861" height="186" viewBox="152 462 861 186" class="chart">
              <text class="din2" x="152.500" y="472" textLength="216">Sum of CreditScore by Geography and Age</text>
              <text class="ag sb" x="152.500" y="491.500" textLength="16.500">Age</text>
              {#each legend as [t, c], i}
                <circle cx={178.6 + i * 29.14} cy="487.700" r="3.600" fill={c} /><text class="ag" x={183.6 + i * 29.14} y="491.500" textLength="16.500">{t}</text>
              {/each}
              <path d="M1007.500 482.500l5 5-5 5z" fill="#222" stroke="#fff" />
              <svg x="152" y="497" width="861" height="151" viewBox="152 497 861 151">
                <filter id="coast" x="-2%" y="-5%" width="104%" height="110%"><feTurbulence type="fractalNoise" baseFrequency=".12" numOctaves="2" seed="4" /><feDisplacementMap in="SourceGraphic" scale="6" xChannelSelector="R" yChannelSelector="G" /></filter>
                <path d="M152 497h861v151H152z" fill="#c8c8c8" />
                <g filter="url(#coast)">
                  {#each land as d}<path {d} fill="#e9e9e9" />{/each}
                  {#each seas as d}<path {d} fill="#c8c8c8" />{/each}
                  {#each isles as d}<path {d} fill="#e9e9e9" />{/each}
                  {#each borders as d}<path {d} fill="none" stroke="#b3b0b3" stroke-width="1" />{/each}
                </g>
                <path d="M1008 497h5v151h-5z" fill="#e9e9e9" />
                {#each [[555, 507.5], [574, 539.5], [793.5, 520.5], [758, 589.5], [811, 637]] as [x, y]}<circle cx={x} cy={y} r="2.200" fill="#e9e9e9" stroke="#8a8a8a" stroke-width=".8" /><circle cx={x} cy={y} r=".7" fill="#8a8a8a" />{/each}
                {#each places as [t, x, y, w, s]}<text class="map" {x} {y} font-size={s} textLength={w}>{t}</text>{/each}
                <g class="map it"><text x="516" y="573.500" textLength="12">Bay</text><text x="505" y="580.500" textLength="34">of Biscay</text><text x="799" y="605" font-size="8" textLength="39">Black Sea</text></g>
                {#each pie as p}<path d={p.d} fill={p.c} stroke="#1f2a60" stroke-width=".45" />{/each}
                <circle cx="529" cy="632.500" r="2" fill="#7d1f5a" /><path d="M527 632.500a2 2 0 014 0z" fill="#197278" /><circle cx="637.300" cy="512.700" r="1.700" fill="#2b2560" />
                <path d="M156 635h3v3h-3z" fill="#f25022" /><path d="M159.500 635h3v3h-3z" fill="#7fba00" /><path d="M156 638.500h3v3h-3z" fill="#00a4ef" /><path d="M159.500 638.500h3v3h-3z" fill="#ffb900" />
                <text class="tiny" x="164" y="640.300" textLength="35.500">Microsoft Bing</text>
                <text class="tiny dk" x="793.500" y="642" textLength="128.500">© 2024 TomTom, © 2024 Microsoft Corporation</text>
                <text class="tiny ln" x="925" y="642" textLength="50">© OpenStreetMap</text><text class="tiny ln" x="980" y="642" textLength="16">Terms</text>
              </svg>
            </svg>
          </div>
        </div>
        <aside class="filters">
          <svg width="14" height="14" viewBox="0 0 14 14"><path d="M7 1L1 7l6 6M13 1L7 7l6 6" fill="none" stroke="#323130" stroke-width="1.100" /></svg>
          <svg class="fun" width="14" height="14" viewBox="0 0 14 14"><path d="M12.500 1.500v11L7 8H2V6h5z" fill="none" stroke="#323130" stroke-width="1.200" /></svg>
          <span class="vt">Filters</span>
        </aside>
      </div>
      <footer class="pages">
        <svg width="127" height="35" viewBox="1 0 127 35" fill="none">
          <path d="M13.500 7.500h17v10h-17zM22 18v2.500M17 20.500h10" stroke="#605e5c" stroke-width="1.300" /><path d="M11 28h24v3H11z" fill="#117865" />
          <rect x="60.500" y="5.500" width="12" height="19" rx="1" stroke="#605e5c" stroke-width="1.300" /><path d="M65.500 21.500h2.500" stroke="#605e5c" />
          <path d="M99 14v8l-4.500-4zM117 14v8l4.500-4z" fill="#b3b0ad" />
        </svg>
        <div class="pg"><span use:fit={35}>Page 1</span></div>
        <div class="pg act"><span use:fit={36}>Page 2</span></div>
        <div class="plus"><svg width="11" height="11" viewBox="0 0 11 11"><path d="M5.500 0v11M0 5.500h11" stroke="#fff" stroke-width="2.600" /></svg></div>
      </footer>
    </div>

    <aside class="viz">
      <div class="vh"><span use:fit={99}>Visualizations</span><svg width="14" height="14" viewBox="0 0 14 14"><path d="M1 1l6 6-6 6M7 1l6 6-6 6" fill="none" stroke="#323130" stroke-width="1.100" /></svg></div>
      <div class="bv"><span use:fit={62}>Build visual</span></div>
      <svg class="modes" width="180" height="46" viewBox="1151 216 180 46" fill="none">
        <path d="M1159 217h32v32h-32z" fill="#d2d0ce" /><path d="M1163 221.500h19" stroke="#111" /><path d="M1164 226h23v8h-23zM1164 237h23v8h-23z" fill="#117865" stroke="#111" stroke-dasharray="2 1.300" />
        <path d="M1243 244.500h-13.500v-23h9l7 7v3M1238.500 222v6.500h7" stroke="#323130" stroke-width="1.200" /><path d="M1252 230l-7 8-4 1-1 5c4 1 7-1 7-4l6-9z" fill="#fff" stroke="#323130" stroke-width="1.200" />
        <path d="M1151 261.500h16l8-7.500 8 7.500h148" stroke="#8a8886" />
      </svg>
      <div class="icons">{#each viz as v}<svg width="18" height="18" viewBox="0 0 18 18" overflow="visible">{@html v}</svg>{/each}</div>
      <div class="vals"><span use:fit={34}>Values</span></div>
      <div class="well w1"><span use:fit={107}>Add data fields here</span></div>
      <div class="dt"><span use:fit={70}>Drill through</span></div>
      <div class="row"><span use:fit={67}>Cross-report</span><div class="tog"><i></i><span use:fit={13}>Off</span></div></div>
      <div class="row r2"><span use:fit={74}>Keep all filters</span><div class="tog on"><span use:fit={12}>On</span><i></i></div></div>
      <div class="well w2"><span use:fit={151}>Add drill-through fields here</span></div>
    </aside>
    <aside class="data">
      <svg width="14" height="14" viewBox="0 0 14 14"><path d="M7 1L1 7l6 6M13 1L7 7l6 6" fill="none" stroke="#323130" stroke-width="1.100" /></svg>
      <span class="vt">Data</span>
    </aside>
  </main>

  <footer class="status">
    <span use:fit={59.5}>Page 2 of 2</span>
    <svg width="130" height="22" viewBox="1150 697 130 22"><path d="M1154 707.500h4.500M1269 707.500h8M1273 703.500v8" stroke="#323130" stroke-width="1.300" /><path d="M1163 707.500h100M1213.500 705v5.500" stroke="#605e5c" /><path d="M1194 702h4v11h-4z" fill="#605e5c" /></svg>
    <span class="pct" use:fit={23}>68%</span>
    <svg width="17" height="13" viewBox="0 0 17 13"><path d="M.7 .7h15.500v11H.7zM3 5V3h2.500M11.500 3H14v2M14 7.500v2h-2.500M5.500 9.500H3v-2" fill="none" stroke="#605e5c" stroke-width="1.200" /></svg>
  </footer>

  <footer class="taskbar">
    <svg width="0" height="0" class="defs"><defs>
      <linearGradient id="win" x2="1" y2="1"><stop stop-color="#7fe0ff" /><stop offset="1" stop-color="#0a9cf5" /></linearGradient>
      <linearGradient id="chat" x2="1" y2="1"><stop stop-color="#8a7be8" /><stop offset="1" stop-color="#5059c9" /></linearGradient>
      <linearGradient id="edge" x2="1" y2=".6"><stop stop-color="#1b9de2" /><stop offset=".6" stop-color="#2cc3d6" /><stop offset="1" stop-color="#5fe05f" /></linearGradient>
      <linearGradient id="sun" x2=".6" y2="1"><stop stop-color="#f8b62d" /><stop offset="1" stop-color="#ef6a1a" /></linearGradient>
      <linearGradient id="cop" x2="0" y2="1"><stop stop-color="#1b6fe0" /><stop offset=".5" stop-color="#27c08a" /><stop offset="1" stop-color="#f3c32d" /></linearGradient>
      <linearGradient id="cop2" x2="0" y2="1"><stop stop-color="#a05af0" /><stop offset="1" stop-color="#f0609a" /></linearGradient>
    </defs></svg>
    <svg class="weather" width="28" height="30" viewBox="20 726 28 30"><circle cx="32" cy="744" r="10" fill="url(#sun)" /><circle cx="39" cy="735" r="8" fill="#ff99a4" /><text x="36.500" y="739.200" font-size="11" font-family="Open Sans,sans-serif" fill="#111">1</text></svg>
    <div class="tasks">
      {#each tasks as t, i}<div class="task"><svg width="25" height="25" viewBox="0 0 25 25" overflow="visible">{@html t}</svg>{#if running.includes(i)}<i></i>{/if}</div>{/each}
    </div>
    <svg class="snip" width="94" height="49" viewBox="870 719 94 49">
      <path d="M870.500 719v49M963.500 719v49" stroke="#4a4248" /><rect x="875" y="724" width="40" height="41" rx="4" fill="#3a3035" stroke="#453b40" />
      <rect x="883" y="732" width="19" height="20" rx="1.500" fill="#f0f3f6" /><path d="M886 747v-11h10v4" fill="none" stroke="#d83b01" stroke-width="3" stroke-dasharray="3 1.200" /><path d="M898 737v12M891 747h9l4-2" stroke="#8a9299" stroke-width="2.500" fill="none" /><circle cx="904.500" cy="746" r="2.300" fill="none" stroke="#1fa0e8" stroke-width="1.600" /><circle cx="896.500" cy="754" r="2.300" fill="none" stroke="#1fa0e8" stroke-width="1.600" />
      <rect x="887" y="761" width="16" height="2.600" rx="1.300" fill="#d695dd" />
      <circle cx="932.500" cy="744" r="1.600" fill="#fff" /><circle cx="939" cy="744" r="1.600" fill="#fff" /><circle cx="945.500" cy="744" r="1.600" fill="#fff" />
    </svg>
    <svg class="tray" width="60" height="49" viewBox="1030 719 60 49"><path d="M1035.500 747l5-5 5 5" fill="none" stroke="#fff" stroke-width="1.500" /><path d="M1068 749q-4-1-3-4t4-3q4-6 8-1 5 1 3 6l-2 2z" fill="#8a8a8a" /><path d="M1066 738l14 12" stroke="#fff" stroke-width="1.300" /></svg>
    <div class="lang"><span use:fit={23}>ENG</span><span use:fit={14}>US</span></div>
    <svg class="sys" width="70" height="49" viewBox="1136 719 70 49" fill="none" stroke="#fff">
      <path d="M1140.500 742q7.500-7 15 0M1142.800 744.700q5.200-4.600 10.400 0M1145 747.200q3-2.600 6 0" stroke-width="1.300" /><circle cx="1148" cy="749" r="1.400" fill="#fff" stroke="none" />
      <path d="M1164.500 742h3l4-3.500v11l-4-3.500h-3zM1173.500 741.500q1.800 2.500 0 5M1176 739.500q3 4.500 0 9M1178.500 738q4 6 0 12" />
      <rect x="1188.500" y="739.500" width="13" height="9" rx="2" /><path d="M1190.500 741.500h8v5h-8z" fill="#fff" stroke="none" /><path d="M1203.500 742.500v3" stroke-width="1.500" />
    </svg>
    <div class="clock"><span use:fit={29}>12:48</span><span use:fit={62}>2024/02/27</span></div>
    <svg class="bell" width="60" height="49" viewBox="1288 719 60 49">
      <path d="M1291.500 748q2-2 2-5 0-6 4.500-6t4.500 6q0 3 2 5zM1296 749.500h4q-2 3-4 0z" fill="#f2b6f2" />
      <path d="M1328 734h8l3 2-5 12q-1 4-4 4h-5q-3-2-2-5l3-10q1-3 2-3z" fill="url(#cop)" /><path d="M1337 739h5q4 1 3 5l-2 7h-9z" fill="url(#cop2)" />
      <rect x="1328" y="746" width="18.500" height="11" rx="2.500" fill="#ffc20e" /><text x="1330.500" y="754.500" font-size="7.500" font-weight="800" font-family="Open Sans,sans-serif" fill="#222" textLength="13.500">PRE</text>
    </svg>
  </footer>
</div>

<style>
  :global(body) { margin: 0; overflow: hidden; }
  .app { width: 1366px; height: 768px; display: flex; flex-direction: column; font: 12px/16px "Open Sans", "Noto Sans", sans-serif; color: #252423; background: #f3f2f1; }
  .app * { box-sizing: border-box; }
  span { white-space: nowrap; display: inline-block; }
  svg { display: block; flex: none; }

  .title { height: 34px; background: #3b3a38; display: flex; align-items: center; color: #fff; flex: none; }
  .doc { display: flex; align-items: center; width: 469px; padding: 6px 0 0 2px; font-size: 11.500px; }
  .bullet { width: 3px; height: 3px; border-radius: 50%; background: #fff; margin: 0 4px 0 5px; }
  .tri { border: 4.500px solid transparent; border-top: 5px solid #fff; border-bottom: 0; margin: -5px 0 0 7px; }
  .search { width: 400px; height: 24px; background: #d5d4d1; display: flex; align-items: center; gap: 11px; padding-left: 17px; color: #1d6154; font-size: 13px; border-radius: 1px; }
  .user { display: flex; align-items: center; gap: 10px; margin-left: 128px; font-size: 11.500px; }
  .wins { margin-left: 27px; }

  .ribbon { height: 126px; background: #fafafa; flex: none; display: flex; flex-direction: column; }
  .menu { display: flex; height: 35px; font-size: 13px; align-items: flex-start; flex: none; }
  .m { height: 31px; padding-top: 8px; }
  .m.on { font-weight: 600; border-bottom: 3px solid #117865; }
  .share { margin: 4px 6px 0 auto; width: 84px; height: 24px; background: #117865; border-radius: 3px; color: #fff; display: flex; align-items: center; padding-left: 6px; gap: 5px; font-size: 12px; }
  .share span { margin: 2px 0 0 3px; }
  .groups { display: flex; padding-top: 1px; height: 91px; }
  .group { border-right: 1px solid #d2d0ce; height: 88px; display: flex; flex-direction: column; align-items: center; flex: none; }
  .btns { display: flex; height: 77px; padding-top: 5px; flex: none; }
  .btn { display: flex; flex-direction: column; align-items: center; }
  .l { height: 16px; display: flex; align-items: center; gap: 2px; font-size: 12px; line-height: 16px; }
  .btn svg + .l { margin-top: 3px; }
  .off .l { color: #bdbbb9; }
  .gl { font-size: 10px; line-height: 14px; }
  .fold { margin: 77px 5px 0 auto; }

  .work { height: 535px; display: flex; flex: none; }
  .rail { width: 41px; border-right: 1px solid #e1dfdd; }
  .center { width: 1109px; }
  .top { display: flex; height: 500px; }
  .canvas { width: 1077px; height: 500px; position: relative; overflow: hidden; }
  .canvas::after { content: ""; position: absolute; inset: 0 0 auto 0; height: 6px; background: linear-gradient(rgba(0, 0, 0, .18), transparent); }
  .photo { position: absolute; inset: 0; }
  .sheet { position: relative; width: 878px; height: 494px; margin-left: 99px; padding-left: 10px; border: 2px dotted #5b5a5a; border-top: 0; }
  .pair { display: flex; }
  .chart { font-family: "Open Sans", sans-serif; }
  .h1 { font-size: 23px; font-weight: 700; fill: #fff; }
  .din { font: 600 15px Roboto, sans-serif; fill: #252423; }
  .din2 { font: 400 11.200px Roboto, sans-serif; fill: #252423; }
  .lg { font-size: 11px; fill: #fff; }
  .b { font-weight: 700; }
  .sb { font-weight: 600; }
  .ax { font-size: 9.500px; fill: #fff; }
  .ax.sm { font-size: 8.500px; }
  .tick { font-size: 8.500px; fill: #fff; }
  .grid { stroke: #b3b3b3; stroke-dasharray: 1 3; fill: none; }
  .ag { font-size: 9.500px; fill: #5a5959; }
  .map { font-family: Roboto, sans-serif; fill: #767676; paint-order: stroke; stroke: #ececec; stroke-width: 1.200px; }
  .it { font-style: italic; font-size: 7.500px; stroke: #d4d4d4; }
  .tiny { font: 6px "Liberation Sans", sans-serif; fill: #6a6a6a; }
  .dk { fill: #333; }
  .ln { fill: #3a63c2; text-decoration: underline; }
  .filters { width: 32px; background: #fff; display: flex; flex-direction: column; align-items: center; padding: 12px 1px 0 0; border-left: 1px solid #c8c6c4; }
  .fun { margin: 15px 0 0 3px; }
  .vt { writing-mode: vertical-rl; font-size: 14px; font-weight: 600; line-height: 18px; margin-top: 8px; letter-spacing: -.1px; }
  .pages { display: flex; height: 35px; font-size: 12px; }
  .pg { width: 77px; height: 35px; background: #fff; border-left: 1px solid #a19f9d; display: flex; align-items: center; justify-content: center; padding-right: 1px; }
  .pg.act { width: 78px; border-left-color: #c8c6c4; border-bottom: 4px solid #117865; padding-top: 4px; padding-right: 3px; font-weight: 600; }
  .plus { width: 39px; height: 32px; margin-top: 2px; background: #117865; display: flex; align-items: center; justify-content: center; }

  .viz { width: 182px; border-left: 1px solid #e1dfdd; border-right: 1px solid #e1dfdd; display: flex; flex-direction: column; }
  .vh { display: flex; justify-content: space-between; align-items: center; padding: 1px 7px 0 8px; height: 38px; font-size: 14.500px; font-weight: 600; flex: none; }
  .bv { height: 18px; padding: 0 0 0 8px; font-size: 11.500px; font-weight: 600; flex: none; }
  .icons { display: grid; grid-template-columns: repeat(6, 18px); gap: 10px; padding: 11px 0 0 10.500px; height: 207px; border-bottom: 1px solid #e1dfdd; flex: none; align-content: start; }
  .vals { margin: 9px 0 4px 12px; height: 17px; }
  .well { margin-left: 4px; width: 170px; background: #fff; border: 1px dashed #c8c6c4; border-radius: 2px; display: flex; align-items: center; flex: none; }
  .w1 { height: 28px; padding: 1px 0 0 10px; }
  .w2 { height: 26px; padding: 1px 0 0 8px; margin-top: 10px; }
  .dt { margin: 11px 0 0 12px; height: 16px; font-weight: 600; color: #4a4846; }
  .row { display: flex; justify-content: space-between; align-items: center; height: 16px; margin: 9px 22px 0 12px; }
  .r2 { margin-top: 11px; }
  .tog { width: 32px; height: 16px; border: 1px solid #605e5c; border-radius: 8px; background: #fff; display: flex; align-items: center; gap: 2px; padding-left: 4px; font-size: 9.500px; color: #605e5c; }
  .tog i { width: 8px; height: 8px; border-radius: 50%; background: #605e5c; }
  .tog.on { background: #117865; border-color: #117865; color: #fff; }
  .tog.on i { background: #fff; }
  .data { width: 34px; display: flex; flex-direction: column; align-items: center; padding: 12px 0 0; }
  .data .vt { margin: 13px 3px 0 0; letter-spacing: .3px; }

  .status { height: 24px; border-top: 1px solid #e1dfdd; display: flex; align-items: center; padding: 2px 0 0 4px; font-size: 11.500px; color: #484644; flex: none; }
  .status > svg:first-of-type { margin: -3px 0 0 1086px; }
  .status .pct { margin: -2px 19px 0 10px; color: #605e5c; }

  .taskbar { height: 49px; background: linear-gradient(90deg, #202022, #231f24 30%, #2c1f25 60%, #2c1f25 72%, #222124 85%, #1f1f20); border-top: 1px solid #000; display: flex; align-items: center; color: #fff; flex: none; box-shadow: inset 0 1px #4a4a4a; }
  .defs { position: absolute; }
  .weather { margin: -4px 0 0 20px; }
  .tasks { display: flex; margin-left: 71px; }
  .task { width: 44px; height: 48px; display: flex; flex-direction: column; align-items: center; padding-top: 12px; }
  .task i { width: 6px; height: 3px; border-radius: 2px; background: #9a9a9a; margin-top: 4px; }
  .snip { margin-left: 3px; }
  .tray { margin-left: 66px; }
  .lang, .clock { display: flex; flex-direction: column; font-size: 11.500px; line-height: 16px; }
  .lang { width: 40px; align-items: center; }
  .sys { margin-left: 6px; }
  .clock { width: 77px; align-items: flex-end; }
  .bell { margin-left: 5px; }
</style>
